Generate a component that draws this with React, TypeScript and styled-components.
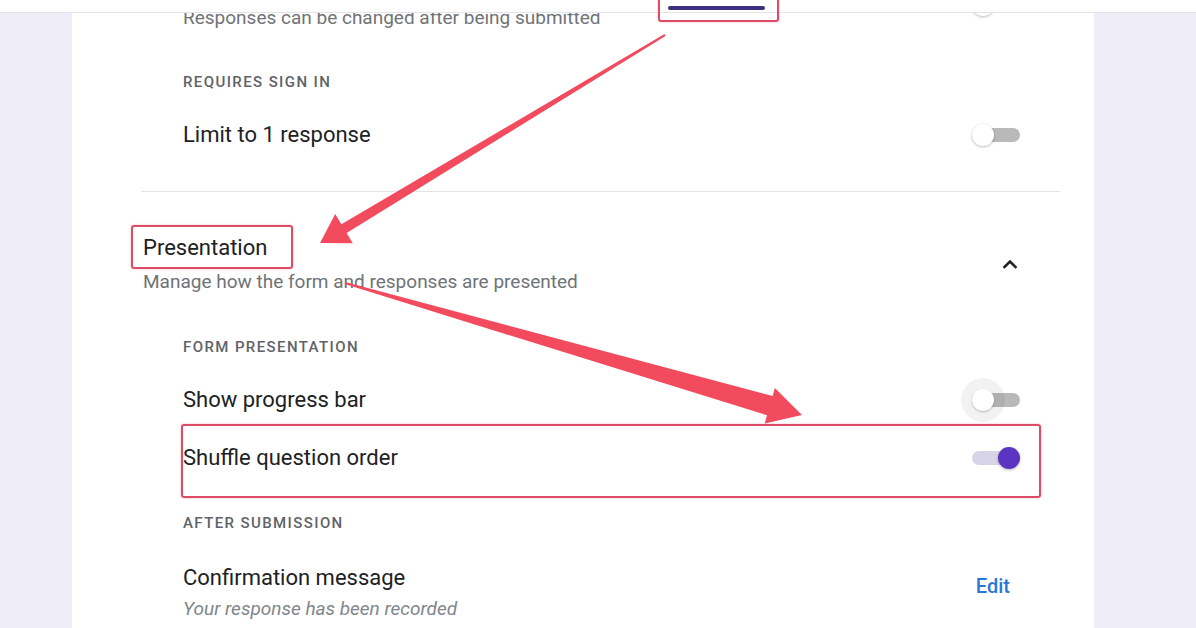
import styled, { createGlobalStyle } from 'styled-components';

const purple = '#5c34c2';
const annot = '#f24b5e';

const GlobalStyle = createGlobalStyle`
  html, body {
    margin: 0;
    padding: 0;
  }
  body {
    background: #efedf8;
    font-family: Roboto, "Noto Sans", Arial, sans-serif;
  }
`;

const Page = styled.div`
  position: relative;
  width: 1196px;
  height: 628px;
  overflow: hidden;
  background: #efedf8;
`;

const TopBar = styled.div`
  position: absolute;
  top: 0;
  left: 0;
  right: 0;
  height: 12px;
  background: #fff;
  border-bottom: 1px solid #e4e3ea;
  z-index: 2;
  display: flex;
  align-items: flex-start;
`;

const TabIndicator = styled.div`
  margin-left: 668px;
  margin-top: 6px;
  width: 97px;
  height: 4px;
  border-radius: 2px;
  background: #3f2f80;
`;

const Card = styled.div`
  margin-left: 72px;
  width: 1022px;
  height: 100%;
  box-sizing: border-box;
  background: #fff;
  padding: 0 34px 0 71px;
  display: flex;
  flex-direction: column;
`;

const Group = styled.div<{ $top?: number }>`
  margin: ${p => p.$top ?? 0}px 40px 0 40px;
  display: flex;
  flex-direction: column;
`;

const Divider = styled.div`
  margin: 27px 0 0 -2px;
  height: 1px;
  background: #e3e3e3;
`;

const SectionHeader = styled.div`
  margin-top: 43px;
  padding-right: 38px;
  display: flex;
  align-items: center;
  justify-content: space-between;
`;

const SectionTitle = styled.div`
  font-size: 22px;
  line-height: 26px;
  color: #202124;
`;

const Desc = styled.div<{ $gap?: number; $italic?: boolean }>`
  margin-top: ${p => p.$gap ?? 0}px;
  font-size: 19px;
  line-height: 20px;
  color: ${p => (p.$italic ? '#80868b' : '#6f7378')};
  font-style: ${p => (p.$italic ? 'italic' : 'normal')};
`;

const SubHeader = styled.div<{ $top: number }>`
  margin-top: ${p => p.$top}px;
  font-size: 15px;
  line-height: 20px;
  font-weight: 500;
  letter-spacing: 1.4px;
  color: #5f6368;
  text-transform: uppercase;
`;

const Row = styled.div<{ $top?: number; $height?: number }>`
  margin-top: ${p => p.$top ?? 0}px;
  height: ${p => (p.$height ? `${p.$height}px` : 'auto')};
  display: flex;
  align-items: center;
  justify-content: space-between;
`;

const TopRow = styled(Row)`
  align-items: flex-start;
`;

const Label = styled.div`
  display: flex;
  flex-direction: column;
`;

const Title = styled.div`
  font-size: 22px;
  line-height: 24px;
  color: #202124;
`;

const Switch = styled.div<{ $lift?: number }>`
  position: relative;
  width: 48px;
  height: 22px;
  flex-shrink: 0;
  margin-top: ${p => (p.$lift ? -p.$lift : 0)}px;
`;

const Track = styled.div<{ $on: boolean }>`
  position: absolute;
  left: 0;
  right: 0;
  top: 4px;
  height: 14px;
  border-radius: 7px;
  background: ${p => (p.$on ? '#d8d4e8' : '#b9b9b9')};
`;

const Knob = styled.div<{ $on: boolean; $halo?: boolean }>`
  position: absolute;
  top: 0;
  ${p => (p.$on ? 'right: 0;' : 'left: 0;')}
  width: 22px;
  height: 22px;
  border-radius: 50%;
  background: ${p => (p.$on ? purple : '#fff')};
  box-shadow: ${p =>
    p.$halo
      ? '0 1px 2px rgba(0,0,0,0.25), 0 0 0 11px rgba(0,0,0,0.05)'
      : '0 1px 3px rgba(0,0,0,0.28)'};
`;

const EditLink = styled.div`
  margin: 8px 10px 0 0;
  font-size: 20px;
  line-height: 24px;
  font-weight: 500;
  color: #2a78d6;
`;

const Callout = styled.div<{ $x: number; $y: number; $w: number; $h: number }>`
  position: absolute;
  left: ${p => p.$x}px;
  top: ${p => p.$y}px;
  width: ${p => p.$w}px;
  height: ${p => p.$h}px;
  box-sizing: border-box;
  border: 2.5px solid #dc4c64;
  border-radius: 3px;
  box-shadow: 0 0 2px rgba(220, 76, 100, 0.45);
  z-index: 3;
  pointer-events: none;
`;

const Arrows = styled.svg`
  position: absolute;
  left: 0;
  top: 0;
  z-index: 4;
  pointer-events: none;
`;

const Toggle = ({ on, halo, lift }: { on: boolean; halo?: boolean; lift?: number }) => (
  <Switch $lift={lift}>
    <Track $on={on} />
    <Knob $on={on} $halo={halo} />
  </Switch>
);

const Chevron = () => (
  <svg width="24" height="24" viewBox="0 0 24 24">
    <polyline points="6.5,15 12,9.5 17.5,15" fill="none" stroke="#202124" strokeWidth="2.6" strokeLinecap="square" />
  </svg>
);

export default function App() {
  return (
    <Page>
      <GlobalStyle />
      <TopBar>
        <TabIndicator />
      </TopBar>

      <Card>
        <Group $top={8}>
          <TopRow>
            <Desc>Responses can be changed after being submitted</Desc>
            <Toggle on={false} lift={14} />
          </TopRow>
          <SubHeader $top={44}>Requires sign in</SubHeader>
          <Row $top={14} $height={58}>
            <Title>Limit to 1 response</Title>
            <Toggle on={false} />
          </Row>
        </Group>

        <Divider />

        <SectionHeader>
          <Label>
            <SectionTitle>Presentation</SectionTitle>
            <Desc $gap={11}>Manage how the form and responses are presented</Desc>
          </Label>
          <Chevron />
        </SectionHeader>

        <Group>
          <SubHeader $top={45}>Form presentation</SubHeader>
          <Row $top={14} $height={58}>
            <Title>Show progress bar</Title>
            <Toggle on={false} halo />
          </Row>
          <Row $height={58}>
            <Title>Shuffle question order</Title>
            <Toggle on />
          </Row>
          <SubHeader $top={26}>After submission</SubHeader>
          <TopRow $top={33}>
            <Label>
              <Title>Confirmation message</Title>
              <Desc $gap={9} $italic>Your response has been recorded</Desc>
            </Label>
            <EditLink>Edit</EditLink>
          </TopRow>
        </Group>
      </Card>

      <Callout $x={658} $y={-4} $w={121} $h={26} />
      <Callout $x={131} $y={225} $w={162} $h={44} />
      <Callout $x={181} $y={424} $w={860} $h={74} />

      <Arrows width="1196" height="628" viewBox="0 0 1196 628">
        <polygon
          fill={annot}
          points="320,243 335.2,214 341.4,224.3 664.5,34.1 665.5,35.9 346.6,232.9 352.8,243.2"
        />
        <polygon
          fill={annot}
          points="802,415 774.9,387.9 772.6,396.1 345.3,282 344.7,284 767,415.3 764.7,423.5"
        />
      </Arrows>
    </Page>
  );
}
